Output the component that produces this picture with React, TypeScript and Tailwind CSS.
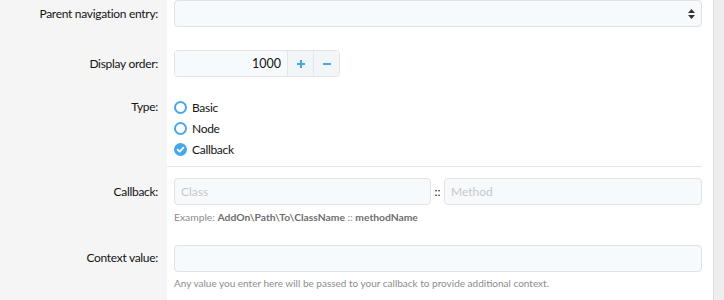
import type { ReactNode } from 'react'

function Row({ label, children, labelPad }: { label: string; children: ReactNode; labelPad: string }) {
  return (
    <div className="flex">
      <div className={`w-[167px] shrink-0 bg-[#f5f5f5] pr-[9px] text-right text-[12px] leading-[18px] tracking-[-0.3px] text-[#141414] ${labelPad}`}>
        {label}
      </div>
      <div className="flex-1 pl-[7px] pr-[11px]">{children}</div>
    </div>
  )
}

function Radio({ label, checked }: { label: string; checked?: boolean }) {
  return (
    <label className="flex h-[21px] items-center gap-[5px] text-[12px] tracking-[-0.3px] text-[#141414]">
      {checked ? (
        <svg width="13" height="13" viewBox="0 0 13 13">
          <circle cx="6.5" cy="6.5" r="6.5" fill="#47a7eb" />
          <path d="M3.6 6.7 L5.7 8.7 L9.4 4.6" fill="none" stroke="#fff" strokeWidth="1.8" strokeLinecap="round" strokeLinejoin="round" />
        </svg>
      ) : (
        <svg width="13" height="13" viewBox="0 0 13 13">
          <circle cx="6.5" cy="6.5" r="5.5" fill="#fff" stroke="#47a7eb" strokeWidth="2" />
        </svg>
      )}
      {label}
    </label>
  )
}

const input = 'h-[27px] rounded-[4px] border border-[#dfe3e7] bg-[#f7fafd] px-[6px] text-[12px] text-[#141414] placeholder:text-[#c8c8c8] outline-none'

export default function App() {
  return (
    <div className="flex h-[300px] w-[724px] bg-white" style={{ fontFamily: '"Segoe UI", Lato, sans-serif' }}>
      <div className="flex flex-1 flex-col">
        <Row label="Parent navigation entry:" labelPad="pt-[5px]">
          <div className="relative pb-[23px]">
            <div className={`${input} w-full`} />
            <svg width="7" height="10" viewBox="0 0 7 10" className="absolute right-[7px] top-[9px]">
              <path d="M3.5 0 L7 4 L0 4 Z M3.5 10 L7 6 L0 6 Z" fill="#333" />
            </svg>
          </div>
        </Row>
        <Row label="Display order:" labelPad="pt-[5px]">
          <div className="pb-[20px]">
            <div className="flex w-[166px] overflow-hidden rounded-[4px] border border-[#dfe3e7]">
              <input
                className="h-[25px] w-[112px] bg-[#f7fafd] px-[6px] text-right text-[12.5px] text-[#141414] outline-none"
                defaultValue="1000"
                readOnly
              />
              <div className="flex w-[26px] items-center justify-center border-l border-[#e4e8ec] bg-[#f3f6f9]">
                <svg width="10" height="10" viewBox="0 0 10 10">
                  <path d="M5 1 V9 M1 5 H9" stroke="#47a7eb" strokeWidth="2.2" />
                </svg>
              </div>
              <div className="flex w-[26px] items-center justify-center border-l border-[#e4e8ec] bg-[#f3f6f9]">
                <svg width="10" height="10" viewBox="0 0 10 10">
                  <path d="M1 5 H9" stroke="#47a7eb" strokeWidth="2.2" />
                </svg>
              </div>
            </div>
          </div>
        </Row>
        <Row label="Type:" labelPad="pt-[1px]">
          <div className="flex flex-col pb-[6px]">
            <Radio label="Basic" />
            <Radio label="Node" />
            <Radio label="Callback" checked />
          </div>
        </Row>
        <div className="flex">
          <div className="w-[167px] shrink-0 bg-[#f5f5f5]" />
          <div className="flex-1 pr-[11px]">
            <div className="h-px bg-[#e6e6e6]" />
          </div>
        </div>
        <Row label="Callback:" labelPad="pt-[16px]">
          <div className="pt-[11px] pb-[20px]">
            <div className="flex items-center">
              <input className={`${input} w-[257px]`} placeholder="Class" readOnly />
              <span className="w-[13px] text-center text-[12px] text-[#141414]">::</span>
              <input className={`${input} flex-1`} placeholder="Method" readOnly />
            </div>
            <div className="mt-[4px] text-[10.3px] leading-[16px] text-[#8c8c8c]">
              Example: <b className="font-bold text-[#6e6e6e]">AddOn\Path\To\ClassName</b> ::{' '}
              <b className="font-bold text-[#6e6e6e]">methodName</b>
            </div>
          </div>
        </Row>
        <Row label="Context value:" labelPad="pt-[4px]">
          <div>
            <input className={`${input} w-full`} readOnly />
            <div className="mt-[3px] text-[10px] leading-[16px] text-[#8c8c8c]">
              Any value you enter here will be passed to your callback to provide additional context.
            </div>
          </div>
        </Row>
        <div className="flex flex-1">
          <div className="w-[167px] shrink-0 bg-[#f5f5f5]" />
        </div>
      </div>
      <div className="w-[11px] shrink-0 border-l border-[#e0e0e0] bg-[#eeeeee]" />
    </div>
  )
}
